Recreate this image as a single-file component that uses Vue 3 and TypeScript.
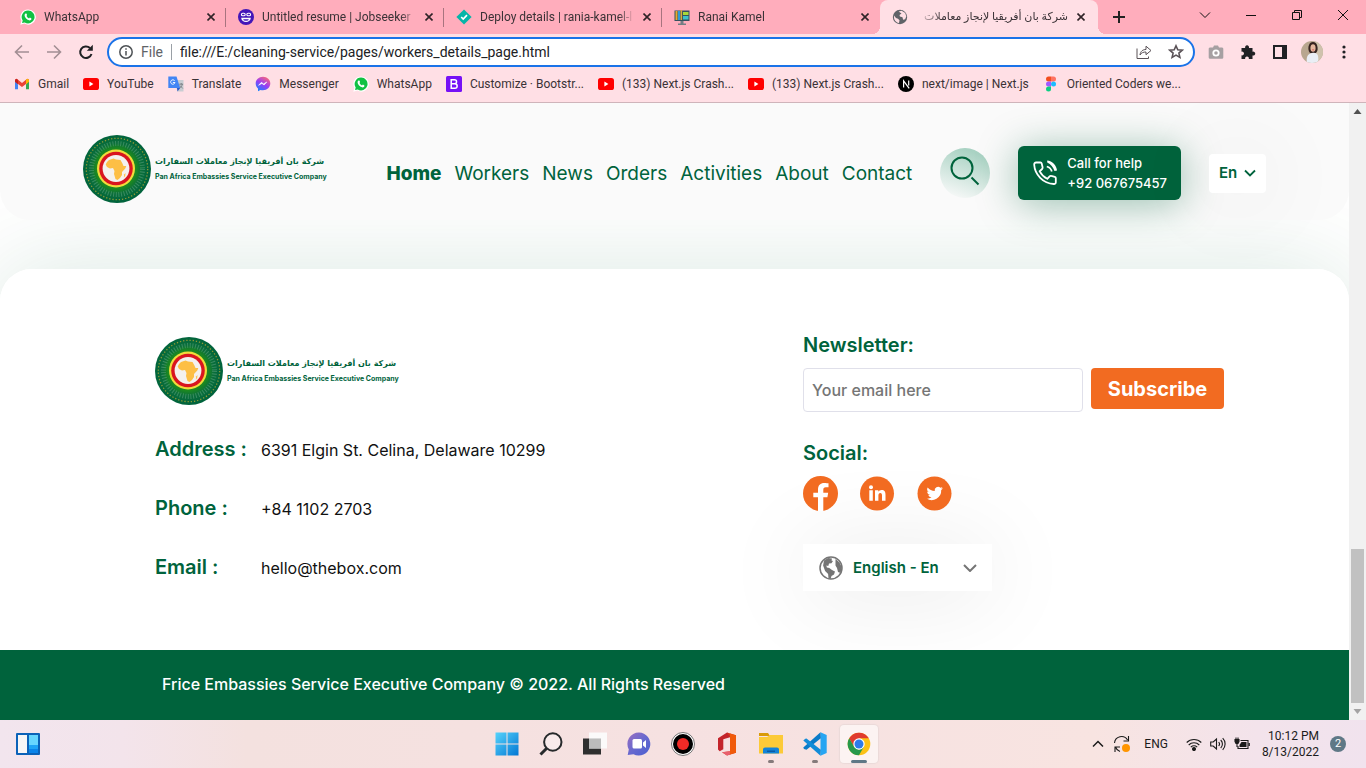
<script setup lang="ts">
import { ref } from 'vue'

interface Tab {
  icon: string
  title: string
  active?: boolean
  rtl?: boolean
}

interface Bookmark {
  icon: string
  label: string
}

const whatsapp =
  '<path d="M8 .4a7.5 7.5 0 0 0-6.5 11.3L.3 15.7l4.2-1.1A7.6 7.6 0 1 0 8 .4z" fill="#fff"/><path d="M8 1.6a6.4 6.4 0 0 0-5.3 9.9l-.7 2.6 2.7-.7A6.4 6.4 0 1 0 8 1.6z" fill="#12c143"/><path d="M5.6 4.6c.5-.3.9-.1 1 .3l.5 1.1-.6 1c.5 1.1 1.4 1.9 2.5 2.4l.9-.8 1.5.8c.3 1.100-.9 2-1.900 2C7 11.200 4.400 8.300 4.600 6.100c.1-.7.5-1.200 1-1.500z" fill="#fff"/>'
const youtube =
  '<rect x="0" y="2" width="16" height="12" rx="2.600" fill="#f00"/><path d="M6.400 5.600v4.800l4-2.400z" fill="#fff"/>'
const globe =
  '<circle cx="12" cy="12" r="11" fill="none" stroke="currentColor" stroke-width="1.500"/><path d="M5 4.500 9 2l4 .4-.5 2 1.500.6-1.500 2.200-2.500.3-.7 2.500-2-.4.6 2 2.400.4L13 14l3 1.400-1 3.200-2.500 1.400-1 3-2-.500-.4-4.500-3-3-2-5.500zM16.500 3l4 3.500 2.500 5-1.500 5.500-2.500-1-1-4-1.500-2.500z" fill="currentColor"/>'

const icons: Record<string, string> = {
  whatsapp,
  youtube,
  jobseeker:
    '<circle cx="8" cy="8" r="8" fill="#4316b8"/><g fill="none" stroke="#fff" stroke-width="1.100"><rect x="3.400" y="4.200" width="3.800" height="2.600" rx="1.300"/><rect x="8.800" y="4.200" width="3.800" height="2.600" rx="1.300"/></g><path d="M3.200 8.800h9.600a4.800 4.300 0 0 1-9.600 0z" fill="#fff"/><path d="M5.200 10.200h5.600a2.800 1.600 0 0 1-5.600 0z" fill="#4316b8"/>',
  deploy:
    '<path d="m8 .4 7.600 7.600L8 15.600.4 8z" fill="#05b5a8"/><path d="m5.200 8 2 2 3.800-3.900" fill="none" stroke="#fff" stroke-width="1.700"/>',
  portfolio:
    '<rect x=".5" y="1.500" width="15" height="10.500" fill="#35515e"/><path d="M1.500 2h2v9h-2z" fill="#e8a92e"/><path d="M4 2h2v9H4z" fill="#2f9ad8"/><path d="M6.500 1h1.600v10H6.500z" fill="#d8a93e"/><path d="M9 3h5.500v3H9z" fill="#a9d838"/><path d="M9 7h5.500v3.500H9z" fill="#3ec1c9"/><path d="M6.500 12h3v2.500h2.500V16H4v-1.500h2.500z" fill="#737d84"/>',
  world:
    '<circle cx="8" cy="8" r="7.200" fill="#5f6368"/><path d="M2 6.500 4 9l2 .7 1.500 1.600-.5 2.700C4 13.500 1.500 11 2 6.500zM6.600 2.500l3-.8 3.600 2.400 1.100 3.400-1.200 2.800-2 .4-.6-2.400-2.600-.7-.4-1.700 2-1.400z" fill="#ffdfe5"/>',
  gmail:
    '<path d="M1 4v9.300h3V8.200z" fill="#4285f4"/><path d="M15 4v9.300h-3V8.200z" fill="#34a853"/><path d="M1 3.500 2.800 2.800 8 7l5.200-4.200 1.800.7v2.300L8 11 1 5.800z" fill="#ea4335"/><path d="M12 3.700 13.200 2.800l1.800 1v2L12 8.200z" fill="#fbbc04"/><path d="M1 3.800v2l3 2.400V4.300L2.800 2.800z" fill="#c5221f"/>',
  translate:
    '<path d="M6 4h9.500v11.500H9.500z" fill="#c9cdd2"/><path d="M.3.400h8.200l3.700 11.600H.3z" fill="#4285f4"/><path d="M9 12h3.200l-2.700 3.500z" fill="#2a56c6"/><path d="M6.700 4.800a2.200 2.200 0 1 0 .3 1.700H4.900" stroke="#fff" stroke-width=".9" fill="none"/><path d="M11.200 8.200h3.900M13.200 7v1.200M14.300 8.200c-.3 1.600-1.200 2.800-2.500 3.800M12 9.500l2.800 3" stroke="#70757a" stroke-width=".8" fill="none"/>',
  messenger:
    '<defs><linearGradient id="msg" x1=".2" y1="1" x2=".8" y2="0"><stop offset="0" stop-color="#1284ff"/><stop offset=".5" stop-color="#9a3cf5"/><stop offset="1" stop-color="#ff6a72"/></linearGradient></defs><path d="M8 .8c-4.200 0-7.300 3-7.300 6.700 0 2 .9 3.700 2.300 4.900v2.800l2.500-1.300c.8.200 1.600.3 2.500.3 4.200 0 7.300-3 7.300-6.700S12.200.8 8 .8z" fill="url(#msg)"/><path d="m3.600 9.300 2.800-3 2.200 1.600 3.200-1.900-2.700 3-2.200-1.600z" fill="#fff" stroke="#fff" stroke-width=".6"/>',
  bootstrap:
    '<rect width="16" height="16" rx="1.500" fill="#7610f6"/><path d="M5.200 3.700h3.300a2.050 2.050 0 0 1 0 4.100H5.200zM5.200 7.800h3.700a2.250 2.250 0 0 1 0 4.500H5.200z" fill="none" stroke="#fff" stroke-width="1.500"/>',
  nextjs:
    '<circle cx="8" cy="8" r="8" fill="#000"/><path d="M5.600 11.500V4.800l5.600 7.600M10.700 4.600v4.800" fill="none" stroke="#fff" stroke-width="1.200"/>',
  figma:
    '<path d="M5.500.5H8v5H5.500a2.500 2.500 0 0 1 0-5z" fill="#f24e1e"/><path d="M8 .5h2.500a2.500 2.500 0 0 1 0 5H8z" fill="#ff7262"/><path d="M5.500 5.500H8v5H5.500a2.500 2.500 0 0 1 0-5z" fill="#a259ff"/><circle cx="10.500" cy="8" r="2.500" fill="#1abcfe"/><path d="M5.500 10.500H8V13a2.500 2.500 0 1 1-2.500-2.500z" fill="#0acf83"/>',
}

const tabs: Tab[] = [
  { icon: 'whatsapp', title: 'WhatsApp' },
  { icon: 'jobseeker', title: 'Untitled resume | Jobseeker' },
  { icon: 'deploy', title: 'Deploy details | rania-kamel-l' },
  { icon: 'portfolio', title: 'Ranai Kamel' },
  { icon: 'world', title: 'شركة بان أفريقيا لإنجاز معاملات', active: true, rtl: true },
]

const bookmarks: Bookmark[] = [
  { icon: 'gmail', label: 'Gmail' },
  { icon: 'youtube', label: 'YouTube' },
  { icon: 'translate', label: 'Translate' },
  { icon: 'messenger', label: 'Messenger' },
  { icon: 'whatsapp', label: 'WhatsApp' },
  { icon: 'bootstrap', label: 'Customize · Bootstr...' },
  { icon: 'youtube', label: '(133) Next.js Crash...' },
  { icon: 'youtube', label: '(133) Next.js Crash...' },
  { icon: 'nextjs', label: 'next/image | Next.js' },
  { icon: 'figma', label: 'Oriented Coders we...' },
]

const emblem =
  '<defs><radialGradient id="glow" cx="33" cy="33.500" r="34" gradientUnits="userSpaceOnUse"><stop offset=".58" stop-color="#1d8a1e"/><stop offset=".74" stop-color="#0b6f3a"/><stop offset="1" stop-color="#00633c"/></radialGradient></defs>' +
  '<circle cx="34" cy="34" r="34" fill="url(#glow)"/>' +
  '<circle cx="34" cy="34" r="25.500" fill="none" stroke="#7fb79b" stroke-opacity=".4" stroke-width="5" stroke-dasharray="1 1.670"/>' +
  '<circle cx="34" cy="34" r="30.700" fill="none" stroke="#8f9a35" stroke-width="1.300" stroke-dasharray="1.300 1.920"/>' +
  '<circle cx="33" cy="33.500" r="19" fill="#f1dc3c"/><circle cx="33" cy="33.500" r="16.800" fill="#d9151f"/><circle cx="33" cy="33.500" r="13.400" fill="#f4f1ee"/>' +
  '<path d="M26 25l4.500-1.500 2.500 1 4.500.5 1.700 3 1.300 3h2.800l-1 2.500-3.300 3.500v3l-2 3-2.500 2-2-1-1.500-5 .5-3-1.500-3-3 .5-3-1.500-1.300-2.500L24 27z" fill="#fdbf45"/><path d="m41.300 39.200 1.200-1.200-.3 3-1.400 1.500z" fill="#fdbf45"/>'

const navItems: string[] = ['Home', 'Workers', 'News', 'Orders', 'Activities', 'About', 'Contact']

const contacts = [
  { label: 'Address :', value: '6391 Elgin St. Celina, Delaware 10299' },
  { label: 'Phone :', value: '+84 1102 2703' },
  { label: 'Email :', value: 'hello@thebox.com' },
]

const socials = [
  {
    name: 'Facebook',
    art: '<circle cx="17.500" cy="17.500" r="17.500" fill="#f26b21"/><path d="M15 35V21.300h-4.700v-4.600H15v-3.200c0-4.200 2.400-6.500 6.200-6.500 1.700 0 4.300.3 4.300.3v4h-2.700c-2 0-2.500 1.200-2.500 2.600v2.800h4.900l-.8 4.600h-4.100V35z" fill="#fff"/>',
  },
  {
    name: 'LinkedIn',
    art: '<circle cx="17" cy="17.500" r="17" fill="#f26b21"/><circle cx="11" cy="11.200" r="2" fill="#fff"/><path d="M9.300 14.300h3.500v10.500H9.300zM15 14.300h3.300v1.500c.7-1.100 1.800-1.800 3.300-1.800 3 0 3.900 1.900 3.900 4.900v5.900H22v-5.300c0-1.500-.4-2.500-1.700-2.500s-1.900 1-1.900 2.500v5.300H15z" fill="#fff"/>',
  },
  {
    name: 'Twitter',
    art: '<circle cx="17.500" cy="17.500" r="17" fill="#f26b21"/><path d="M25.900 12.300c-.6.300-1.200.5-1.900.5.700-.4 1.200-1 1.400-1.800-.6.400-1.300.6-2 .8a3.400 3.400 0 0 0-5.700 3.100 9.400 9.400 0 0 1-7-3.500 3.400 3.400 0 0 0 1 4.500c-.5 0-1-.2-1.500-.4 0 1.600 1.100 3 2.700 3.300-.5.200-1 .2-1.500.1.400 1.300 1.600 2.300 3.100 2.300a6.700 6.700 0 0 1-4.900 1.400 9.500 9.500 0 0 0 14.600-8.500c.7-.5 1.200-1.100 1.700-1.800z" fill="#fff"/>',
  },
]

const taskApps = [
  {
    name: 'Start',
    art: '<defs><linearGradient id="win" x1="0" y1="0" x2="1" y2="1"><stop offset="0" stop-color="#56d3fb"/><stop offset="1" stop-color="#0277d4"/></linearGradient></defs><path d="M.5.5h11v11H.5zM12.500.5h11v11h-11zM.5 12.500h11v11H.5zM12.500 12.500h11v11h-11z" fill="url(#win)"/>',
  },
  {
    name: 'Search',
    art: '<circle cx="13.800" cy="10" r="8.700" fill="#fff" fill-opacity=".35" stroke="#26292b" stroke-width="2"/><path d="m7.500 16.500-6 6" stroke="#26292b" stroke-width="3"/>',
  },
  {
    name: 'Task view',
    art: '<path d="M0 6.500h18v16H0z" fill="#2f2f2f"/><path d="M6 .5h18v16H6z" fill="#fbfbfb" fill-opacity=".95"/><path d="M6 6.500h12v10H6z" fill="#bcbcbc"/>',
  },
  {
    name: 'Chat',
    art: '<defs><linearGradient id="chat" x1="0" y1="0" x2="1" y2="1"><stop offset="0" stop-color="#9a6fc0"/><stop offset=".5" stop-color="#6869cf"/><stop offset="1" stop-color="#4a5fd0"/></linearGradient></defs><path d="M12 .5a11.500 11.500 0 1 1-5.500 21.700L.7 23l1.100-5.500A11.500 11.500 0 0 1 12 .5z" fill="url(#chat)"/><rect x="5.500" y="7" width="9.500" height="9.500" rx="1.500" fill="#fff"/><path d="m16 10.500 3-2.500v8l-3-2.500z" fill="#fff"/>',
  },
  {
    name: 'Recorder',
    art: '<circle cx="12" cy="12" r="11.500" fill="#fff" stroke="#555" stroke-width=".8"/><circle cx="12" cy="12" r="10" fill="#000"/><circle cx="12" cy="12" r="6" fill="#f02a26"/>',
  },
  {
    name: 'Office',
    art: '<path d="M3 6.200 12 .5l3 1.800v2.900L8.300 7.300v10l-3.600 2L3 17.500z" fill="#c3242b"/><path d="M12 .5 21 3.300v17.400L12 23.500l-5-3.300 8-.9V5.200z" fill="#d6371c"/><path d="M15 1.500v21l6-1.800V3.300z" fill="#f05a0a"/><path d="m7 20.200 8-.9v3.200l-3 1z" fill="#e8606f"/>',
  },
  {
    name: 'File Explorer',
    running: true,
    art: '<path d="M0 1h9l2 3H0z" fill="#d99a07"/><path d="M0 5h8l3-2h13v18.500H0z" fill="#fcca38"/><path d="M4 21.500v-4a2 2 0 0 1 2-2h12a2 2 0 0 1 2 2v4z" fill="#1383d8"/><path d="M8 18.500h8v1.500H8z" fill="#0a5ba5"/>',
  },
  {
    name: 'Visual Studio Code',
    running: true,
    art: '<path d="M17.500.3 23.700 3v18l-6.200 2.700z" fill="#27a5f2"/><path d="m17.500.3.3 6L3.500 17.800 1 17l-.7-1.500z" fill="#0a7bc8"/><path d="m.3 8.500 2-1.700 1.200-.2 14.300 11.200-.3 5.900z" fill="#128bd8"/>',
  },
  {
    name: 'Google Chrome',
    active: true,
    art: '<circle cx="12" cy="12" r="11.300" fill="#fbc116"/><path d="M2.200 6.350A11.300 11.300 0 0 1 21.800 6.350H12L7.100 14.800z" fill="#e03b2e"/><path d="M2.200 6.350 7.100 14.800 12 17.650 16.900 14.800 12 23.300A11.300 11.300 0 0 1 2.200 6.350z" fill="#27984a"/><circle cx="12" cy="12" r="5.700" fill="#fff"/><circle cx="12" cy="12" r="4.500" fill="#2c7bea"/>',
  },
]

const url = ref('file:///E:/cleaning-service/pages/workers_details_page.html')
const email = ref('')
</script>

<template>
  <div class="screen">
    <header class="browser">
      <div class="tab-strip">
        <div v-for="tab in tabs" :key="tab.title" class="tab" :class="{ active: tab.active }">
          <svg class="icon16" viewBox="0 0 16 16" aria-hidden="true" v-html="icons[tab.icon]"></svg>
          <span class="tab-title" :class="{ rtl: tab.rtl }" :dir="tab.rtl ? 'rtl' : 'ltr'">{{ tab.title }}</span>
          <button class="tab-close" type="button" aria-label="Close tab">
            <svg viewBox="0 0 8 8" aria-hidden="true"><path d="m.5.5 7 7m0-7-7 7" /></svg>
          </button>
        </div>
        <button class="new-tab" type="button" aria-label="New tab">
          <svg viewBox="0 0 12 12" aria-hidden="true"><path d="M6 0v12M0 6h12" /></svg>
        </button>
        <div class="window-controls">
          <button type="button" aria-label="Search tabs">
            <svg viewBox="0 0 12 12" aria-hidden="true"><path d="m1 3.500 5 5 5-5" /></svg>
          </button>
          <button type="button" aria-label="Minimize">
            <svg viewBox="0 0 12 12" aria-hidden="true"><path d="M1 6.500h10" /></svg>
          </button>
          <button type="button" aria-label="Restore">
            <svg viewBox="0 0 12 12" aria-hidden="true"><path d="M1.500 3.500h7v7h-7zM3.500 3.500v-2h7v7h-2" /></svg>
          </button>
          <button type="button" aria-label="Close">
            <svg viewBox="0 0 12 12" aria-hidden="true"><path d="m1 1 10 10m0-10L1 11" /></svg>
          </button>
        </div>
      </div>

      <div class="toolbar">
        <button class="tool muted" type="button" aria-label="Back">
          <svg viewBox="0 0 16 16" aria-hidden="true"><path d="M15 8H2m6-6.500L1.500 8 8 14.500" /></svg>
        </button>
        <button class="tool muted" type="button" aria-label="Forward">
          <svg viewBox="0 0 16 16" aria-hidden="true"><path d="M1 8h13M8 1.500 14.500 8 8 14.500" /></svg>
        </button>
        <button class="tool reload" type="button" aria-label="Reload">
          <svg viewBox="0 0 16 16" aria-hidden="true"><path d="M13.500 10A5.800 5.800 0 1 1 12 4" /><path class="solid" d="M14.800.8v6H8.800z" /></svg>
        </button>
        <div class="address">
          <svg class="info" viewBox="0 0 14 14" aria-hidden="true"><circle cx="7" cy="7" r="6.200" /><path d="M7 6v4.500M7 3.300v1.500" /></svg>
          <span class="scheme">File</span>
          <input v-model="url" type="text" aria-label="Address" />
          <button class="tool" type="button" aria-label="Share">
            <svg class="thin" viewBox="0 0 16 16" aria-hidden="true"><path d="M1 4.500v10h11.500v-2M4 11c.5-4 3-5.500 6-5.500V2.200L15 6.500l-5 4.200V8C7.500 8 5.500 8.500 4 11z" /></svg>
          </button>
          <button class="tool" type="button" aria-label="Bookmark this page">
            <svg class="star" viewBox="0 0 16 16" aria-hidden="true"><path d="m8 1.800 1.800 4 4.400.4-3.300 2.900 1 4.300L8 11.100l-3.900 2.300 1-4.300-3.300-2.900 4.400-.4z" /></svg>
          </button>
        </div>
        <button class="tool" type="button" aria-label="Screenshot extension">
          <svg viewBox="0 0 16 16" aria-hidden="true"><path d="M2 3.500h3l1-2h4l1 2h3A1.300 1.300 0 0 1 15.300 5v8.500a1.300 1.300 0 0 1-1.300 1.300H2A1.300 1.300 0 0 1 .7 13.500V5A1.300 1.300 0 0 1 2 3.500z" fill="#a6a0a2" stroke="none" /><circle cx="8" cy="9" r="2.700" fill="none" stroke="#fff" stroke-width="1.800" /></svg>
        </button>
        <button class="tool" type="button" aria-label="Extensions">
          <svg viewBox="0 0 16 16" aria-hidden="true"><path class="solid" d="M1.500 4h3.700a2 2 0 1 1 3.700 0h3.600v3.700a2 2 0 1 1 0 3.700V15H8.800a1.900 1.900 0 1 0-3.600 0H1.500v-3.700a1.900 1.900 0 1 0 0-3.600z" /></svg>
        </button>
        <button class="tool" type="button" aria-label="Side panel">
          <svg viewBox="0 0 16 16" aria-hidden="true"><path class="solid" d="M1 1h14v14H1zm2 2v10h7V3z" fill-rule="evenodd" /></svg>
        </button>
        <button class="tool" type="button" aria-label="Profile">
          <svg class="avatar" viewBox="0 0 22 22" aria-hidden="true">
            <defs><clipPath id="face"><circle cx="11" cy="11" r="11" /></clipPath></defs>
            <g clip-path="url(#face)" stroke="none">
              <path d="M0 0h22v22H0z" fill="#b8a68f" />
              <path d="M14 0h8v22h-8z" fill="#cfc2ad" />
              <path d="M8 4c1-4 7-4 8 0 1 3 1 6-1 8H9C7 10 7 6 8 4z" fill="#35231f" />
              <path d="M6 22c-1-5 0-9 5-10 6-1 7 3 6 10z" fill="#e9eef5" />
              <ellipse cx="12" cy="7" rx="2.600" ry="3.800" fill="#e5b79d" />
              <path d="M10.800 8.500h2.600l-1.300 1.300z" fill="#c94c50" />
            </g>
          </svg>
        </button>
        <button class="tool" type="button" aria-label="Menu">
          <svg viewBox="0 0 16 16" aria-hidden="true"><g class="solid"><circle cx="8" cy="3" r="1.600" /><circle cx="8" cy="8" r="1.600" /><circle cx="8" cy="13" r="1.600" /></g></svg>
        </button>
      </div>

      <nav class="bookmarks" aria-label="Bookmarks">
        <a v-for="(mark, i) in bookmarks" :key="i" href="#">
          <svg class="icon16" viewBox="0 0 16 16" aria-hidden="true" v-html="icons[mark.icon]"></svg>
          <span>{{ mark.label }}</span>
        </a>
      </nav>
    </header>

    <div class="viewport">
      <div class="page">
        <header class="site-header">
          <a class="brand" href="#">
            <svg viewBox="0 0 68 68" aria-hidden="true" v-html="emblem"></svg>
            <span class="brand-text">
              <span class="brand-ar" dir="rtl" lang="ar">شركة بان أفريقيا لإنجاز معاملات السفارات</span>
              <span class="brand-en">Pan Africa Embassies Service Executive Company</span>
            </span>
          </a>
          <nav class="main-nav" aria-label="Main">
            <a v-for="item in navItems" :key="item" href="#" :class="{ current: item === 'Home' }">{{ item }}</a>
          </nav>
          <button class="search" type="button" aria-label="Search">
            <svg viewBox="0 0 30 30" aria-hidden="true"><circle cx="12" cy="12" r="10.500" /><path d="m21.500 21.500 7 7" /></svg>
          </button>
          <a class="call" href="tel:+92067675457">
            <svg viewBox="0 0 24 26" aria-hidden="true">
              <path d="M3.200 2.500h4.300c.7 0 1 .3 1.200 1l.9 3.800c.2.800 0 1.200-.5 1.700L6.700 11.300c1.800 3.400 4.200 5.800 7.600 7.500l2.300-2.400c.5-.5 1-.7 1.700-.5l3.500.9c.7.200 1 .6 1 1.300v4.200c0 1.200-.8 1.800-2 1.700C10 23.500 1.800 14.500 1.200 4.800c-.1-1.300.6-2.300 2-2.300z" />
              <path d="M13.800 6.500c2.500.7 4.300 2.400 5 5" />
              <path class="fill" d="M14.200.5c5 .5 9.500 5 9.800 10l-2.500.5c-1.500-4-3.500-6.500-7.300-8.500z" />
            </svg>
            <span>Call for help<br />+92 067675457</span>
          </a>
          <label class="lang-mini">
            <select aria-label="Language">
              <option>En</option>
              <option>Ar</option>
            </select>
            <svg viewBox="0 0 12 8" aria-hidden="true"><path d="m1 1.500 5 5 5-5" /></svg>
          </label>
        </header>

        <footer class="site-footer">
          <div class="footer-card">
            <div class="contact">
              <a class="brand" href="#">
                <svg viewBox="0 0 68 68" aria-hidden="true" v-html="emblem"></svg>
                <span class="brand-text">
                  <span class="brand-ar" dir="rtl" lang="ar">شركة بان أفريقيا لإنجاز معاملات السفارات</span>
                  <span class="brand-en">Pan Africa Embassies Service Executive Company</span>
                </span>
              </a>
              <dl>
                <div v-for="row in contacts" :key="row.label">
                  <dt>{{ row.label }}</dt>
                  <dd>{{ row.value }}</dd>
                </div>
              </dl>
            </div>
            <div class="connect">
              <form @submit.prevent>
                <label class="heading" for="newsletter">Newsletter:</label>
                <div class="subscribe">
                  <input id="newsletter" v-model="email" type="email" placeholder="Your email here" />
                  <button type="submit">Subscribe</button>
                </div>
              </form>
              <h2 class="heading">Social:</h2>
              <div class="socials">
                <a v-for="s in socials" :key="s.name" href="#" :aria-label="s.name">
                  <svg viewBox="0 0 35 35" aria-hidden="true" v-html="s.art"></svg>
                </a>
              </div>
              <label class="lang">
                <svg class="globe" viewBox="0 0 24 24" aria-hidden="true" v-html="globe"></svg>
                <select aria-label="Site language">
                  <option>English - En</option>
                  <option>Arabic - Ar</option>
                </select>
                <svg class="chevron" viewBox="0 0 14 8" aria-hidden="true"><path d="m1 1 6 6 6-6" /></svg>
              </label>
            </div>
          </div>
          <p class="copyright">Frice Embassies Service Executive Company © 2022. All Rights Reserved</p>
        </footer>
      </div>
      <div class="scrollbar" aria-hidden="true">
        <svg viewBox="0 0 17 17"><path d="M4.500 11h8l-4-5z" fill="#505050" /></svg>
        <div class="thumb"></div>
        <svg viewBox="0 0 17 17"><path d="M4.500 6h8l-4 5z" fill="#a3a3a3" /></svg>
      </div>
    </div>

    <div class="taskbar">
      <button class="widgets" type="button" aria-label="Widgets">
        <svg viewBox="0 0 24 22" aria-hidden="true">
          <rect width="24" height="22" rx="1" fill="#0b62b8" />
          <path d="M2 2h9v18H2z" fill="#f6f6f6" />
          <path d="M13 2h9v10h-9z" fill="#66d6ff" />
          <path d="M13 12h9v4h-9z" fill="#1ea4f6" />
          <path d="M13 16h9v4h-9z" fill="#0a84ea" />
        </svg>
      </button>
      <div class="apps">
        <button
          v-for="app in taskApps"
          :key="app.name"
          type="button"
          :aria-label="app.name"
          :class="{ running: app.running, focused: app.active }"
        >
          <svg viewBox="0 0 24 24" aria-hidden="true" v-html="app.art"></svg>
        </button>
      </div>
      <div class="tray">
        <svg class="up" viewBox="0 0 12 8" aria-hidden="true"><path d="m1 6.500 5-5 5 5" /></svg>
        <svg class="sync" viewBox="0 0 18 18" aria-hidden="true">
          <path d="M1.500 8A7 7 0 0 1 14.500 5M15.500 1v5h-5M7 16.500A7 7 0 0 1 2.500 12M2 17v-5h5" />
          <circle cx="13" cy="13" r="4" fill="#ff9500" stroke="none" />
        </svg>
        <span class="input-lang">ENG</span>
        <svg class="wifi" viewBox="0 0 16 14" aria-hidden="true">
          <path d="M.7 5.500a10.300 10.300 0 0 1 14.600 0M2.700 8a7.400 7.400 0 0 1 10.600 0M4.800 10.200a4.600 4.600 0 0 1 6.400 0" /><circle cx="8" cy="12" r="1.500" fill="#1b1b1b" />
        </svg>
        <svg class="sound" viewBox="0 0 16 14" aria-hidden="true">
          <path d="M.7 5v4h2.500L6.500 12V2L3.200 5zM8.700 5a3 3 0 0 1 0 4M10.700 3a5.500 5.500 0 0 1 0 8M12.700 1.200a8.200 8.200 0 0 1 0 11.600" />
        </svg>
        <svg class="battery" viewBox="0 0 16 14" aria-hidden="true">
          <path d="M6.500 3.500h7.500v8h-10V9M15.300 6v3" /><path d="M7.500 5h5v5H5.500V8z" fill="#1b1b1b" stroke="none" /><path d="M1 2.500h4v2L4 6.500H2L1 4.500zM2 .5v2M4 .5v2M3 6.500V10" fill="#1b1b1b" />
        </svg>
        <time class="clock" datetime="2022-08-13T22:12">10:12 PM<br />8/13/2022</time>
        <span class="count">2</span>
      </div>
    </div>
  </div>
</template>

<style>
html,
body {
  margin: 0;
  background: #fff;
}
</style>

<style scoped>
* {
  box-sizing: border-box;
}

.screen {
  display: flex;
  flex-direction: column;
  min-height: 100vh;
  color: #3a3236;
  font-family: Roboto, 'Open Sans', 'DejaVu Sans', sans-serif;
  font-size: 12px;
  line-height: 16px;
}

button,
input,
select {
  margin: 0;
  padding: 0;
  border: 0;
  background: none;
  color: inherit;
  font: inherit;
}

a {
  color: inherit;
  text-decoration: none;
}

svg {
  display: block;
  flex: none;
}

.icon16 {
  width: 16px;
  height: 16px;
}

/* Browser window */
.browser {
  background: #ffdfe5;
  border-bottom: 1px solid #cfb4ba;
}

.tab-strip {
  display: flex;
  height: 34px;
  padding-left: 8px;
  background: #ffadbc;
}

.tab {
  position: relative;
  display: flex;
  flex: 0 1 218px;
  align-items: center;
  gap: 8px;
  min-width: 0;
  padding: 0 10px 0 12px;
}

.tab::after {
  content: '';
  position: absolute;
  top: 8px;
  right: 0;
  width: 1px;
  height: 19px;
  background: #a8747f;
}

.tab:nth-child(4)::after {
  display: none;
}

.tab.active {
  padding-right: 12px;
  background: #ffdfe5;
  border-radius: 8px 8px 0 0;
}

.tab.active::before,
.tab.active::after {
  top: auto;
  bottom: 0;
  width: 8px;
  height: 8px;
}

.tab.active::before {
  content: '';
  position: absolute;
  left: -8px;
  background: radial-gradient(circle at 0 0, #ffadbc 8px, #ffdfe5 8px);
}

.tab.active::after {
  right: -8px;
  background: radial-gradient(circle at 100% 0, #ffadbc 8px, #ffdfe5 8px);
}

.tab-title {
  flex: 1;
  min-width: 0;
  overflow: hidden;
  white-space: nowrap;
  mask-image: linear-gradient(to right, #000 90%, transparent);
}

.tab-title.rtl {
  font-size: 11px;
  mask-image: linear-gradient(to left, #000 82%, transparent);
}

.tab-close {
  display: grid;
  flex: none;
  place-items: center;
  width: 10px;
  height: 16px;
}

.tab-close svg {
  width: 8px;
  height: 8px;
  stroke: #2f2327;
  stroke-width: 1.6;
}

.new-tab {
  display: grid;
  place-items: center;
  width: 28px;
  margin-left: 7px;
}

.new-tab svg {
  width: 12px;
  height: 12px;
  stroke: #222;
  stroke-width: 2;
}

.window-controls {
  display: flex;
  margin-left: auto;
}

.window-controls button {
  display: grid;
  place-items: center;
  width: 46px;
  height: 29px;
}

.window-controls svg {
  width: 12px;
  height: 12px;
  fill: none;
  stroke: #111;
}

.toolbar {
  display: flex;
  align-items: center;
  height: 36px;
  padding: 0 6px;
}

.tool {
  display: grid;
  flex: none;
  place-items: center;
  width: 32px;
  height: 28px;
}

.tool svg {
  width: 16px;
  height: 16px;
  fill: none;
  stroke: #5a5257;
  stroke-width: 1.6;
}

.tool .solid {
  fill: #202124;
  stroke: none;
}

.tool.muted svg {
  stroke: #a38f94;
}

.tool.reload svg {
  stroke: #202124;
  stroke-width: 2;
}

.tool svg.thin {
  stroke-width: 1;
}

.tool svg.avatar {
  width: 22px;
  height: 22px;
}

.address {
  display: flex;
  flex: 1;
  align-items: center;
  height: 30px;
  margin: 0 5px;
  padding: 0 1px 0 10px;
  background: #fff;
  border: 2px solid #1a73e8;
  border-radius: 15px;
  color: #202124;
  font-size: 14px;
}

.info {
  width: 14px;
  height: 14px;
  fill: none;
  stroke: #4e5256;
  stroke-width: 1.5;
}

.scheme {
  margin-left: 8px;
  padding-right: 8px;
  border-right: 1px solid #9aa0a6;
  color: #5f6368;
}

.address input {
  flex: 1;
  min-width: 0;
  padding-left: 8px;
  outline: 0;
}

.bookmarks {
  display: flex;
  gap: 14px;
  align-items: center;
  height: 32px;
  padding: 0 14px 4px;
  overflow: hidden;
  white-space: nowrap;
}

.bookmarks a {
  display: flex;
  gap: 8px;
  align-items: center;
}

/* Web page */
.viewport {
  display: flex;
  flex: 1;
}

.page {
  display: flex;
  flex: 1;
  flex-direction: column;
  min-width: 0;
  overflow: hidden;
  background: #fff;
  color: #00633c;
  font-family: Inter, 'Open Sans', 'DejaVu Sans', sans-serif;
}

.site-header {
  z-index: 1;
  display: flex;
  align-items: center;
  gap: 28px;
  padding: 32px 83px 9px;
  background: #fafafa;
  border-radius: 0 0 30px 30px;
}

.brand {
  display: flex;
  align-items: center;
  gap: 4px;
}

.brand svg {
  width: 68px;
  height: 68px;
}

.site-header .brand {
  margin-right: auto;
  padding-bottom: 8px;
}

.brand-text {
  display: flex;
  flex-direction: column;
  align-items: flex-start;
  font-weight: 700;
  line-height: 15px;
  white-space: nowrap;
}

.brand-ar {
  font-family: 'DejaVu Sans', sans-serif;
  font-size: 8px;
}

.brand-en {
  font-size: 7px;
}

.main-nav {
  display: flex;
  gap: 13px;
  font-size: 19px;
  line-height: 27px;
  white-space: nowrap;
}

.main-nav .current {
  font-weight: 800;
}

.search {
  display: grid;
  flex: none;
  place-items: center;
  width: 50px;
  height: 50px;
  background: linear-gradient(200deg, #a9d2c3 15%, #fafafa 95%);
  border-radius: 50%;
}

.search svg {
  width: 30px;
  height: 30px;
  margin-bottom: 4px;
  fill: none;
  stroke: #00633c;
  stroke-width: 2;
}

.call {
  display: flex;
  align-items: center;
  gap: 9px;
  height: 54px;
  padding: 0 14px;
  background: #00633c;
  border-radius: 6px;
  box-shadow: 0 4px 40px rgba(0, 99, 60, 0.4);
  color: #fff;
  font-size: 13px;
  font-weight: 500;
  line-height: 20px;
  white-space: nowrap;
}

.call svg {
  width: 26px;
  height: 26px;
  fill: none;
  stroke: #fff;
  stroke-width: 1.8;
}

.call .fill {
  fill: #fff;
  stroke: none;
}

.lang-mini {
  display: flex;
  flex: none;
  align-items: center;
  gap: 7px;
  height: 39px;
  padding: 0 10px;
  background: #fff;
  border-radius: 4px;
  box-shadow: 0 4px 90px rgba(0, 0, 0, 0.1);
}

select {
  appearance: none;
}

.lang-mini select {
  width: 18px;
  font-size: 15px;
  font-weight: 600;
}

.lang-mini svg {
  width: 12px;
  height: 8px;
  fill: none;
  stroke: #00633c;
  stroke-width: 1.8;
}

.site-footer {
  display: flex;
  flex: 1;
  flex-direction: column;
  margin-top: 49px;
  border-radius: 32px 32px 0 0;
  box-shadow: 0 0 100px rgba(0, 99, 60, 0.15);
}

.footer-card {
  display: grid;
  flex: 1;
  grid-template-columns: 648fr 421fr;
  padding: 61px 125px 58px 155px;
  background: #fff;
  border-radius: 32px 32px 0 0;
}

.contact {
  padding-top: 7px;
}

dl {
  display: flex;
  flex-direction: column;
  gap: 28px;
  margin: 29px 0 0;
}

dl div {
  display: flex;
  align-items: baseline;
}

dt {
  width: 106px;
  font-size: 20px;
  font-weight: 600;
  line-height: 30px;
}

dd {
  margin: 0;
  color: #111;
  font-size: 16px;
  line-height: 30px;
}

.heading {
  display: block;
  margin: 0;
  font-size: 20px;
  font-weight: 600;
  line-height: 30px;
}

.subscribe {
  display: flex;
  align-items: flex-start;
  gap: 8px;
  margin: 8px 0 26px;
}

.subscribe input {
  flex: 1;
  min-width: 0;
  height: 44px;
  padding: 0 8px;
  border: 1px solid #e0e0ea;
  border-radius: 4px;
  color: #333;
  font-size: 16px;
  font-weight: 500;
}

.subscribe input::placeholder {
  color: #757575;
  opacity: 1;
}

.subscribe button {
  width: 133px;
  height: 41px;
  background: #f26b21;
  border-radius: 4px;
  color: #fff;
  font-size: 20px;
  font-weight: 700;
}

.socials {
  display: flex;
  gap: 22px;
  margin: 8px 0 33px;
}

.socials svg {
  width: 35px;
  height: 35px;
}

.lang {
  display: flex;
  align-items: center;
  width: 189px;
  height: 47px;
  padding: 0 15px 0 16px;
  background: #fff;
  box-shadow: 0 4px 90px rgba(0, 0, 0, 0.1);
}

.lang select {
  flex: 1;
  min-width: 0;
  padding-left: 10px;
  font-size: 15px;
  font-weight: 600;
}

.lang .globe {
  width: 24px;
  height: 24px;
  color: #757575;
}

.lang .chevron {
  width: 14px;
  height: 8px;
  fill: none;
  stroke: #757575;
  stroke-width: 2;
}

.copyright {
  z-index: 1;
  margin: 0;
  padding: 22px 162px 24px;
  background: #00633c;
  color: #fff;
  font-size: 16px;
  font-weight: 500;
  line-height: 24px;
}

.scrollbar {
  display: flex;
  flex: none;
  flex-direction: column;
  width: 17px;
  background: #f1f1f1;
}

.scrollbar svg {
  width: 17px;
  height: 17px;
}

.thumb {
  height: 25%;
  margin: auto 2px 0;
  background: #c1c1c1;
}

/* Taskbar */
.taskbar {
  display: grid;
  grid-template-columns: 1fr auto 1fr;
  align-items: center;
  height: 48px;
  background: linear-gradient(90deg, #f2e5ee 0%, #f3e4eb 9%, #f4e1df 18%, #f6e1e1 50%, #f8e4e1 80%, #f3e3eb 92%, #f1e3ee 100%);
}

.widgets {
  justify-self: start;
  padding-left: 16px;
}

.widgets svg {
  width: 24px;
  height: 22px;
}

.apps {
  display: flex;
  gap: 6px;
}

.apps button {
  position: relative;
  display: grid;
  place-items: center;
  width: 38px;
  height: 38px;
  border-radius: 4px;
}

.apps svg {
  width: 24px;
  height: 24px;
}

.apps .focused {
  background: #fcf3f2;
  box-shadow: 0 0 1px 1px #eadad9;
}

.apps .running::after,
.apps .focused::after {
  content: '';
  position: absolute;
  bottom: 0;
  left: 16px;
  width: 6px;
  height: 3px;
  background: #857a7b;
  border-radius: 2px;
}

.apps .focused::after {
  left: 11px;
  width: 16px;
  background: #5f7886;
}

.tray {
  display: flex;
  align-items: center;
  justify-content: flex-end;
  padding-right: 20px;
  color: #1b1b1b;
}

.tray svg {
  width: 16px;
  height: 14px;
  fill: none;
  stroke: #1b1b1b;
  stroke-width: 1.1;
}

.tray .up {
  width: 12px;
  height: 8px;
  stroke-width: 1.5;
}

.tray .sync {
  width: 18px;
  height: 18px;
  margin-left: 9px;
}

.input-lang {
  margin: 0 18px 0 13px;
}

.tray .sound,
.tray .battery {
  margin-left: 8px;
}

.clock {
  margin-left: 12px;
  text-align: right;
}

.count {
  width: 16px;
  margin-left: 11px;
  background: #5f7886;
  border-radius: 50%;
  color: #fff;
  font-size: 11px;
  text-align: center;
}
</style>
